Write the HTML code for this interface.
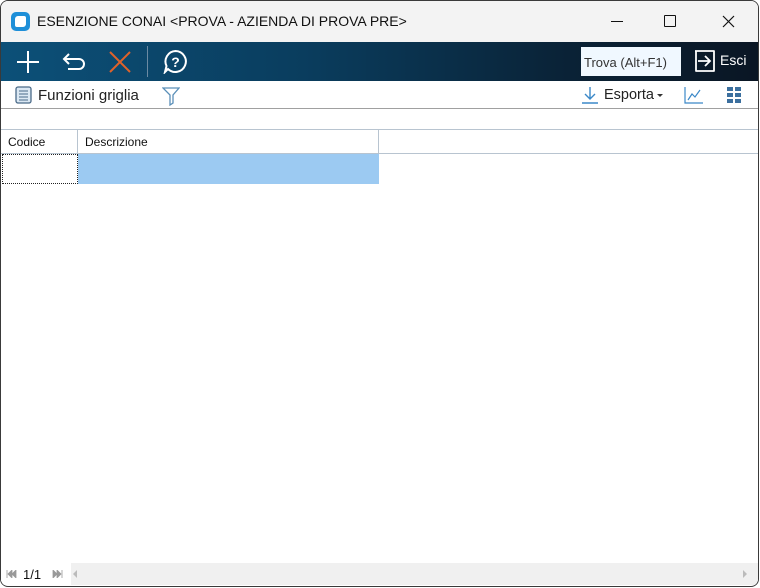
<!DOCTYPE html><html><head><style>
*{margin:0;padding:0;box-sizing:border-box}
body{width:760px;height:588px;background:#fff;font-family:"Liberation Sans",sans-serif;overflow:hidden;position:relative}
.win{position:absolute;left:0;top:0;width:759px;height:587px;border:1px solid #3a3a3a;border-radius:8px;overflow:hidden;background:#fff}
.title{position:absolute;left:0;top:0;width:100%;height:41px;background:#f3f3f3;font-size:14px;color:#111}
.tb{position:absolute;left:0;top:41px;width:100%;height:39px;background:linear-gradient(90deg,#0c5078 0%,#0a3d5e 40%,#0a2236 75%,#0a1624 100%)}
.sb{position:absolute;left:0;top:80px;width:100%;height:28px;border-bottom:1px solid #a0a0a0;font-size:14px;color:#222}
.abs{position:absolute}
</style></head><body><div class="win">
<div class="title">
<div class="abs" style="left:10px;top:11px;width:19px;height:19px;background:#1e8fd8;border-radius:5px"><div style="margin:4px;width:11px;height:11px;background:#fff;border-radius:3px 2px 3px 2px"></div></div>
<div class="abs" style="left:36px;top:12px">ESENZIONE CONAI &lt;PROVA - AZIENDA DI PROVA PRE&gt;</div>
<div class="abs" style="left:610px;top:20px;width:12px;height:1px;background:#111"></div>
<div class="abs" style="left:663px;top:14px;width:12px;height:12px;border:1px solid #111;border-radius:1px"></div>
<svg class="abs" style="left:721px;top:14px" width="13" height="13"><path d="M1 1L12 12M12 1L1 12" stroke="#111" stroke-width="1.2"/></svg>
</div>
<div class="tb">
<svg class="abs" style="left:15px;top:8px" width="24" height="24"><path d="M12 1V23M1 12H23" stroke="#fff" stroke-width="2"/></svg>
<svg class="abs" style="left:61px;top:9px" width="26" height="22"><path d="M7 3L2 8L7 13M2 8H17A5 5 0 0 1 17 18H6" fill="none" stroke="#fff" stroke-width="2"/></svg>
<svg class="abs" style="left:108px;top:9px" width="22" height="22"><path d="M1 1L21 21M21 1L1 21" stroke="#e0622a" stroke-width="2"/></svg>
<div class="abs" style="left:146px;top:4px;width:1px;height:31px;background:#6b8aa3"></div>
<svg class="abs" style="left:162px;top:7px" width="25" height="25"><path d="M12.5 2A10.5 10.5 0 1 1 5 20L2 23L3.5 17A10.5 10.5 0 0 1 12.5 2Z" fill="none" stroke="#fff" stroke-width="2"/><text x="12.5" y="18" font-size="14" font-weight="bold" fill="#fff" text-anchor="middle" font-family="Liberation Sans">?</text></svg>
<div class="abs" style="left:580px;top:5px;width:100px;height:29px;background:#f0f8ff;font-size:13px;color:#333;padding:8px 0 0 3px">Trova (Alt+F1)</div>
<svg class="abs" style="left:692px;top:7px" width="26" height="24"><path d="M13 2H3V22H13M2 2H21V22H13" fill="none" stroke="#fff" stroke-width="1.8" stroke-linejoin="round"/><path d="M5 12H17M12 7L17 12L12 17" fill="none" stroke="#fff" stroke-width="1.8"/></svg>
<div class="abs" style="left:719px;top:10px;font-size:14px;color:#fff">Esci</div>
</div>
<div class="sb">
<svg class="abs" style="left:14px;top:5px" width="18" height="18"><rect x="1" y="1" width="15" height="16" rx="2" fill="#dbe8f3" stroke="#4a6a88" stroke-width="1.3"/><path d="M4 5H13M4 8H13M4 11H13M4 14H13" stroke="#4a6a88"/></svg>
<div class="abs" style="left:37px;top:6px;font-size:15px">Funzioni griglia</div>
<svg class="abs" style="left:161px;top:5px" width="18" height="20"><path d="M1 2H17L11 9V17L8 19V9Z" fill="none" stroke="#5a8fb8" stroke-width="1.3"/></svg>
<svg class="abs" style="left:580px;top:5px" width="18" height="18"><path d="M9 1V13M4 8L9 13L14 8M1 17H17" fill="none" stroke="#3b88c8" stroke-width="1.4"/></svg>
<div class="abs" style="left:603px;top:6px;font-size:14.5px">Esporta</div>
<div class="abs" style="left:656px;top:13px;border-left:3px solid transparent;border-right:3px solid transparent;border-top:3px solid #333"></div>
<svg class="abs" style="left:683px;top:5px" width="20" height="18"><path d="M1 1V17H19M4 14L8 8L11 11L16 4" fill="none" stroke="#3b88c8" stroke-width="1.2"/></svg>
<svg class="abs" style="left:726px;top:6px" width="14" height="16"><g fill="#3b6f9e"><rect x="0" y="0" width="6" height="4"/><rect x="8" y="0" width="6" height="4"/><rect x="0" y="6" width="6" height="4"/><rect x="8" y="6" width="6" height="4"/><rect x="0" y="12" width="6" height="4"/><rect x="8" y="12" width="6" height="4"/></g></svg>
</div>
<div class="abs" style="left:0;top:128px;width:757px;height:25px;border-top:1px solid #b8c4d0;border-bottom:1px solid #b8c4d0;background:#fff;font-size:12px;color:#111">
<div class="abs" style="left:7px;top:5px">Codice</div>
<div class="abs" style="left:76px;top:0;width:1px;height:24px;background:#b8c4d0"></div>
<div class="abs" style="left:84px;top:5px">Descrizione</div>
<div class="abs" style="left:377px;top:0;width:1px;height:24px;background:#b8c4d0"></div>
</div>
<div class="abs" style="left:1px;top:153px;width:76px;height:30px;border:1px dotted #222"></div>
<div class="abs" style="left:77px;top:153px;width:301px;height:30px;background:#9ccaf2"></div>
<div class="abs" style="left:0;top:562px;width:757px;height:22px;background:#f0f0f0;font-size:13px;color:#111">
<div class="abs" style="left:0;top:0;width:70px;height:22px;background:#fff"></div>
<svg class="abs" style="left:5px;top:7px" width="11" height="8"><path d="M1 0V8M6 0L2 4L6 8ZM10 0L6 4L10 8Z" fill="#999" stroke="#999" stroke-width="0.8"/></svg>
<div class="abs" style="left:22px;top:4px">1/1</div>
<svg class="abs" style="left:51px;top:7px" width="11" height="8"><path d="M10 0V8M5 0L9 4L5 8ZM1 0L5 4L1 8Z" fill="#999" stroke="#999" stroke-width="0.8"/></svg>
<div class="abs" style="left:72px;top:7px;border-top:4px solid transparent;border-bottom:4px solid transparent;border-right:4px solid #bbb"></div>
<div class="abs" style="left:742px;top:7px;border-top:4px solid transparent;border-bottom:4px solid transparent;border-left:4px solid #bbb"></div>
</div>
</div></body></html>
